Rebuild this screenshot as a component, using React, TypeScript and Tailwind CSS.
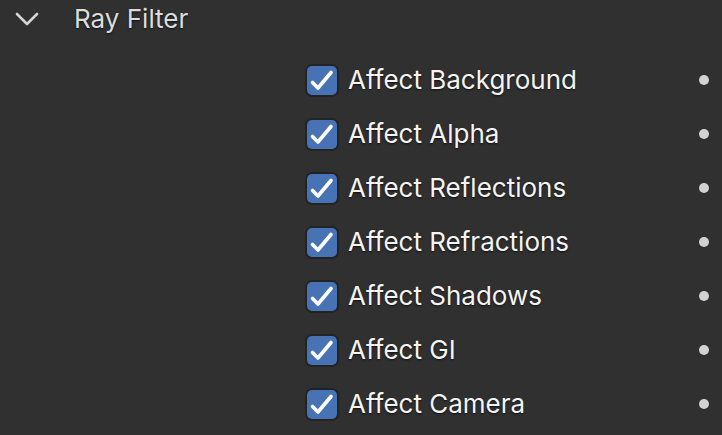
import React from "react";

const items = [
  "Affect Background",
  "Affect Alpha",
  "Affect Reflections",
  "Affect Refractions",
  "Affect Shadows",
  "Affect GI",
  "Affect Camera",
];

function CheckBox() {
  return (
    <div className="w-[34px] h-[33px] rounded-[7px] bg-[#232323] p-[2px] shrink-0">
      <div className="w-full h-full rounded-[5px] bg-[#4772b3] flex items-center justify-center">
        <svg width="30" height="29" viewBox="0 0 30 29" fill="none">
          <path
            d="M5.5 16.5 L11 22 L24 6.5"
            stroke="#ffffff"
            strokeWidth="3.6"
            strokeLinecap="round"
            strokeLinejoin="round"
          />
        </svg>
      </div>
    </div>
  );
}

export default function App() {
  return (
    <div
      className="w-[722px] h-[435px] bg-[#303030] overflow-hidden"
      style={{ fontFamily: "Inter, 'Noto Sans', sans-serif" }}
    >
      <div className="h-[37px] flex items-center">
        <div className="w-[74px] flex items-center pl-[15px]">
          <svg width="24" height="14" viewBox="0 0 24 14" fill="none">
            <path
              d="M2 2 L12 12 L22 2"
              stroke="#d4d4d4"
              strokeWidth="2.6"
              strokeLinecap="round"
              strokeLinejoin="round"
            />
          </svg>
        </div>
        <span className="text-[26px] leading-none text-[#dcdcdc] [text-shadow:0_1px_2px_rgba(0,0,0,0.7)]">
          Ray Filter
        </span>
      </div>
      <div className="flex flex-col mt-[16px]">
        {items.map((label) => (
          <div key={label} className="h-[54px] flex items-center pl-[305px] pr-[13px]">
            <CheckBox />
            <span className="ml-[9px] text-[26px] leading-none text-[#f4f4f4] [text-shadow:0_1px_2px_rgba(0,0,0,0.7)]">
              {label}
            </span>
            <div className="flex-1" />
            <div className="w-[10px] h-[10px] rounded-full bg-[#d2d2d2]" />
          </div>
        ))}
      </div>
    </div>
  );
}
